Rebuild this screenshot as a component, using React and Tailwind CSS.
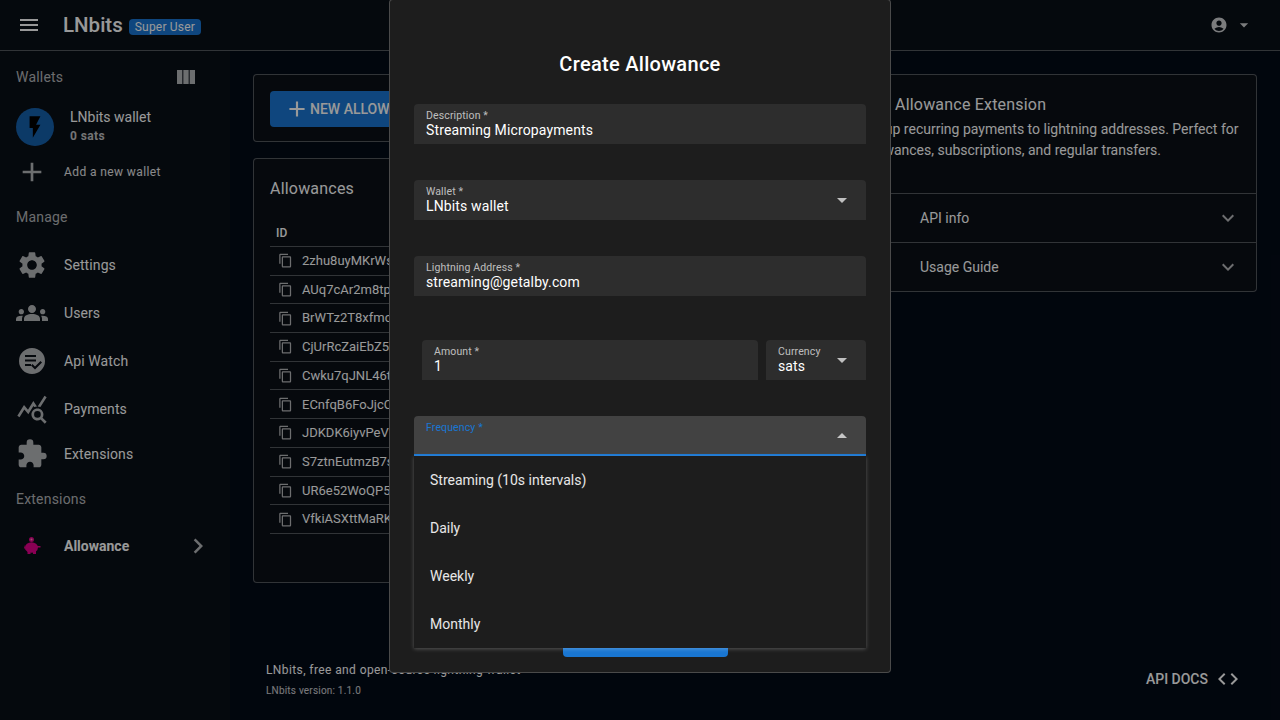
import React from "react";
import {
  MdMenu,
  MdViewColumn,
  MdFlashOn,
  MdAdd,
  MdSettings,
  MdGroups,
  MdQueryStats,
  MdExtension,
  MdChevronRight,
  MdExpandMore,
  MdContentCopy,
  MdAccountCircle,
  MdArrowDropDown,
  MdArrowDropUp,
  MdCode,
} from "react-icons/md";

const ids = [
  "2zhu8uyMKrWs",
  "AUq7cAr2m8tp",
  "BrWTz2T8xfmc",
  "CjUrRcZaiEbZ5",
  "Cwku7qJNL46t",
  "ECnfqB6FoJjcC",
  "JDKDK6iyvPeV",
  "S7ztnEutmzB7s",
  "UR6e52WoQP5",
  "VfkiASXttMaRK",
];

const frequencies = ["Streaming (10s intervals)", "Daily", "Weekly", "Monthly"];

// api watch icon, no matching one in the packages
const ApiWatchIcon = () => (
  <svg viewBox="0 0 32 32" className="w-8 h-8 text-white/70" fill="currentColor">
    <path
      fillRule="evenodd"
      d="M16 3a13 13 0 1 0 0 26a13 13 0 0 0 0-26ZM9 10h11v2H9v-2Zm0 4.500h11v2H9v-2Zm0 4.500h6v2H9v-2Zm17 -1.500l-7 7l-4-4l1.500-1.500l2.500 2.500l5.500-5.500l1.500 1.500Z"
    />
  </svg>
);

// piggy bank logo of the extension
const PigIcon = () => (
  <svg viewBox="0 0 20 20" className="w-5 h-5 text-[#e6008c]" fill="currentColor">
    <circle cx="9.500" cy="3.500" r="2.500" />
    <circle cx="9.500" cy="3.500" r="1" fill="#f48fb1" />
    <ellipse cx="9.500" cy="11.500" rx="6.500" ry="5.300" />
    <path d="M3 9l-1 3l2 2ZM15 10h3.500v1.500H15ZM5.500 15h3v3h-3ZM11 15h3v3h-3Z" />
  </svg>
);

const NavItem = ({ icon, label, className = "h-12" }) => (
  <div className={`flex items-center pl-4 ${className}`}>
    <div className="w-8 flex justify-center text-white/70">{icon}</div>
    <span className="ml-4 text-sm text-white tracking-[0.1px]">{label}</span>
  </div>
);

const SectionLabel = ({ children, className = "" }) => (
  <div className={`px-4 h-5 leading-5 text-sm text-white/70 tracking-[0.2px] ${className}`}>
    {children}
  </div>
);

const Field = ({ label, value, select, className = "" }) => (
  <div className={`relative h-10 bg-[#2d2d2d] rounded-t px-3 ${className}`}>
    <div className="pt-[6px] text-[10.5px] leading-3 text-white/70 tracking-[0.13px]">{label}</div>
    <div className="text-[14px] leading-[18px] -mt-[1px] text-white tracking-[0.13px]">{value}</div>
    {select && (
      <MdArrowDropDown className="absolute right-[12px] top-[8px] text-white/70" size={24} />
    )}
  </div>
);

const App = () => {
  return (
    <div className="relative w-[1280px] h-[720px] overflow-hidden bg-[#030a17] text-white font-['Roboto',sans-serif]">
      {/* top bar */}
      <header className="h-[51px] flex items-center bg-[#090f17] border-b border-white/30 pl-5 pr-[30px]">
        <MdMenu size={24} className="-ml-[3px] mr-[22px] text-white" />
        <span className="text-[20.5px] font-medium leading-none">LNbits</span>
        <span className="ml-[6px] mt-[3px] bg-[#1976d2] rounded px-[6px] h-4 flex items-center text-xs tracking-[0.2px]">
          Super User
        </span>
        <div className="ml-auto flex items-center text-white/80">
          <MdAccountCircle size={18} />
          <MdArrowDropDown size={20} className="ml-[6px] -mr-[4px]" />
        </div>
      </header>

      <div className="flex h-[669px]">
        {/* sidebar */}
        <aside className="w-[230px] shrink-0 bg-[#090f17] pt-4">
          <div className="relative">
            <SectionLabel>Wallets</SectionLabel>
            <MdViewColumn size={24} className="absolute left-[174px] top-[-2px] text-white/70" />
          </div>
          <div className="mt-4 h-12 flex items-center pl-4">
            <div className="w-[38px] h-[38px] rounded-full bg-[#1976d2]/80 flex items-center justify-center">
              <MdFlashOn size={26} className="text-black" />
            </div>
            <div className="ml-4 -mt-[4px]">
              <div className="text-sm leading-5">LNbits wallet</div>
              <div className="text-xs font-bold leading-4 mt-[1px] text-white/75 tracking-[0.4px]">0 sats</div>
            </div>
          </div>
          <div className="h-[42px] flex items-center pl-4">
            <div className="w-8 flex justify-center text-white/70">
              <MdAdd size={34} />
            </div>
            <span className="ml-4 text-xs text-white/90 tracking-[0.4px]">Add a new wallet</span>
          </div>
          <SectionLabel className="mt-[14px]">Manage</SectionLabel>
          <div className="mt-[14px]">
            <NavItem icon={<MdSettings size={32} />} label="Settings" />
            <NavItem icon={<MdGroups size={32} />} label="Users" />
            <NavItem icon={<ApiWatchIcon />} label="Api Watch" />
            <NavItem icon={<MdQueryStats size={32} />} label="Payments" />
            <NavItem icon={<MdExtension size={32} />} label="Extensions" className="h-[42px]" />
          </div>
          <SectionLabel className="mt-[14px]">Extensions</SectionLabel>
          <div className="mt-[13px] h-12 flex items-center pl-4 pr-[17px]">
            <div className="w-8 flex justify-center">
              <PigIcon />
            </div>
            <span className="ml-4 text-sm font-bold text-white">Allowance</span>
            <MdChevronRight size={30} className="ml-auto text-white/70" />
          </div>
        </aside>

        {/* main content */}
        <main className="relative flex-1 pl-[23px] pr-[23px] pt-[23px]">
          <div className="flex gap-[15px]">
            <div className="w-[573px] shrink-0 flex flex-col gap-4">
              <div className="h-[68px] border border-white/30 rounded bg-[#0a0f17] p-4">
                <button className="h-9 w-[170px] bg-[#1976d2] rounded-sm flex items-center px-5 text-sm font-medium text-white whitespace-nowrap">
                  <MdAdd size={26} className="-ml-[6px] shrink-0" />
                  NEW ALLOWANCE
                </button>
              </div>
              <div className="h-[425px] border border-white/30 rounded bg-[#0a0f17] px-4 pt-[18px]">
                <div className="text-base leading-6 tracking-[0.2px]">Allowances</div>
                <div className="mt-[22px] h-[20px] pl-[6px] text-xs font-medium leading-5">ID</div>
                <div className="border-b border-white/30 h-[4px]" />
                {ids.map((id) => (
                  <div key={id} className="h-[28.7px] flex items-center border-b border-white/30 pl-[8px]">
                    <MdContentCopy size={15} className="text-white/70" />
                    <span className="ml-[9px] text-[13px]">{id}</span>
                  </div>
                ))}
              </div>
            </div>
            <div className="flex-1 h-[218px] border border-white/30 rounded bg-[#0a0f17]">
              <div className="h-[118px] pl-[19px] pr-[15px] pt-[18px]">
                <div className="pl-[34px] text-base leading-6 tracking-[0.2px]">Allowance Extension</div>
                <p className="mt-[2px] text-sm leading-[21px]">
                  Set up recurring payments to lightning addresses. Perfect for allowances, subscriptions, and regular transfers.
                </p>
              </div>
              <div className="h-[49px] flex items-center border-t border-white/30 pl-[78px] pr-4 text-sm">
                API info
                <MdExpandMore size={24} className="ml-auto text-white/70" />
              </div>
              <div className="h-[49px] flex items-center border-t border-white/30 pl-[78px] pr-4 text-sm">
                Usage Guide
                <MdExpandMore size={24} className="ml-auto text-white/70" />
              </div>
            </div>
          </div>
          <footer className="absolute left-[36px] right-[40px] top-[610px] flex items-start justify-between">
            <div>
              <div className="text-xs leading-[18px] tracking-[0.4px]">LNbits, free and open-source lightning wallet</div>
              <div className="mt-[4px] text-[10px] leading-4 tracking-[0.2px] text-white/80">LNbits version: 1.1.0</div>
            </div>
            <div className="flex items-center mt-[6px] text-sm font-medium">
              API DOCS
              <MdCode size={24} className="ml-[8px]" />
            </div>
          </footer>
        </main>
      </div>

      {/* dialog backdrop */}
      <div className="absolute inset-0 bg-black/40" />

      {/* dialog, scrolled so its top is cut off */}
      <div className="absolute left-[389px] top-[-1px] w-[502px] h-[674px] bg-[#1d1d1d] border border-white/20 rounded px-6 pt-[48px]">
        <h2 className="h-8 leading-8 text-center text-[20px] font-medium tracking-[0.3px]">Create Allowance</h2>
        <div className="mt-6 flex flex-col gap-9">
          <Field label="Description *" value="Streaming Micropayments" />
          <Field label="Wallet *" value="LNbits wallet" select />
          <Field label="Lightning Address *" value="streaming@getalby.com" />
        </div>
        <div className="mt-11 pl-2 flex gap-2">
          <Field label="Amount *" value="1" className="flex-1" />
          <Field label="Currency" value="sats" select className="w-[100px]" />
        </div>
        <div className="relative mt-9">
          <div className="relative h-10 bg-[#424242] rounded-t px-3 border-b-2 border-[#1976d2]">
            <div className="pt-[6px] text-[10.5px] leading-3 text-[#1976d2] tracking-[0.13px]">Frequency *</div>
            <MdArrowDropUp size={24} className="absolute right-[12px] top-[8px] text-white/70" />
          </div>
          <div className="absolute left-0 right-0 top-10 z-10 h-[192px] bg-[#1d1d1d] shadow-[0_1px_4px_rgba(255,255,255,0.25)]">
            {frequencies.map((f) => (
              <div key={f} className="h-12 flex items-center px-4 text-sm text-white/90">
                {f}
              </div>
            ))}
          </div>
          <div className="mt-[165px] ml-[149px] w-[165px] h-9 rounded bg-[#1976d2]" />
        </div>
      </div>
    </div>
  );
};

export default App;
